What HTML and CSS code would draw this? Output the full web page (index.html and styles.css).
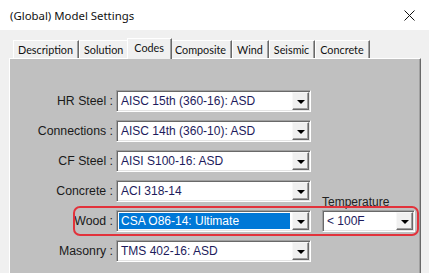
FILE: index.html
```html
<!DOCTYPE html>
<html lang="en">
<head>
  <meta charset="UTF-8" />
  <title>(Global) Model Settings</title>
  <link rel="stylesheet" href="styles.css">
</head>
<body>
  <div class="window">
    <header class="titlebar">
      <span class="title">(Global) Model Settings</span>
      <svg class="close" width="11" height="11" viewBox="0 0 11 11">
        <path d="M0.5 0.5 L10.5 10.5 M10.5 0.5 L0.5 10.5" stroke="#111" stroke-width="1" fill="none" />
      </svg>
    </header>

    <div class="dialog">
      <nav class="tabs">
        <span class="tab">Description</span>
        <span class="tab">Solution</span>
        <span class="tab active">Codes</span>
        <span class="tab">Composite</span>
        <span class="tab">Wind</span>
        <span class="tab">Seismic</span>
        <span class="tab">Concrete</span>
      </nav>

      <section class="panel">
        <div class="codes-grid">
          <label class="field-label">HR Steel :</label>
          <div class="combo"><span class="combo-value">AISC 15th (360-16): ASD</span><span class="combo-btn"></span></div>

          <label class="field-label">Connections :</label>
          <div class="combo"><span class="combo-value">AISC 14th (360-10): ASD</span><span class="combo-btn"></span></div>

          <label class="field-label">CF Steel :</label>
          <div class="combo"><span class="combo-value">AISI S100-16: ASD</span><span class="combo-btn"></span></div>

          <label class="field-label">Concrete :</label>
          <div class="combo"><span class="combo-value">ACI 318-14</span><span class="combo-btn"></span></div>
          <span class="temp-label">Temperature</span>

          <label class="field-label">Wood :</label>
          <div class="combo"><span class="combo-value selected">CSA O86-14: Ultimate</span><span class="combo-btn"></span></div>
          <div class="combo temp-combo"><span class="combo-value">&lt; 100F</span><span class="combo-btn"></span></div>

          <label class="field-label">Masonry :</label>
          <div class="combo"><span class="combo-value">TMS 402-16: ASD</span><span class="combo-btn"></span></div>
        </div>

        <div class="highlight"></div>
      </section>
    </div>
  </div>
</body>
</html>
```

FILE: styles.css
```css
html, body {
  margin: 0;
  padding: 0;
}
body {
  width: 429px;
  height: 273px;
  overflow: hidden;
  background: #f0f0f0;
  font-family: "Liberation Sans", Arial, sans-serif;
}
.window {
  display: flex;
  flex-direction: column;
  height: 100%;
}

/* title bar */
.titlebar {
  height: 30px;
  flex: none;
  background: #fff;
  display: flex;
  align-items: center;
  justify-content: space-between;
  padding: 0 14px 0 10px;
}
.title {
  font-family: "Noto Sans", sans-serif;
  font-size: 11.4px;
  color: #111;
  margin-top: 1px;
}
.close { display: block; }

/* tabs */
.dialog {
  flex: 1;
  display: flex;
  flex-direction: column;
  padding: 8px 0 0 9px;
}
.tabs {
  display: flex;
  align-items: flex-end;
  padding-left: 4px;
  height: 20px;
  position: relative;
  z-index: 1;
}
.tab {
  font-family: Lato, "Noto Sans", sans-serif;
  font-size: 10.8px;
  color: #111;
  height: 18px;
  line-height: 17px;
  box-sizing: border-box;
  padding: 0 5px 0 4px;
  border-top: 1px solid #fff;
  border-left: 1px solid #fff;
  border-right: 1px solid #696969;
  box-shadow: inset -1px 0 #a0a0a0;
  background: #f0f0f0;
}
.tab.active {
  height: 21px;
  line-height: 18px;
  margin: 0 -2px -1px;
  padding: 0 7px 0 6px;
  position: relative;
}

/* panel */
.panel {
  flex: 1;
  position: relative;
  width: 410px;
  background: #c0c0c0;
  border-top: 1px solid #fff;
  border-left: 1px solid #fff;
  border-right: 1px solid #696969;
  box-shadow: inset -1px 0 #a0a0a0;
}
.codes-grid {
  display: grid;
  grid-template-columns: 103px 198px 104px;
  grid-auto-rows: 22px;
  row-gap: 8px;
  padding-top: 31px;
}
.field-label {
  grid-column: 1;
  justify-self: end;
  align-self: center;
  font-size: 12.3px;
  color: #1a1a1a;
  white-space: nowrap;
}
.combo {
  grid-column: 2;
  justify-self: end;
  width: 195px;
  box-sizing: border-box;
  display: flex;
  align-items: stretch;
  background: #fff;
  border: 1px solid;
  border-color: #a0a0a0 #fff #fff #a0a0a0;
  box-shadow: inset 1px 1px #696969, inset -1px -1px #e3e3e3;
  padding: 2px;
}
.combo-value {
  flex: 1;
  font-size: 12px;
  line-height: 16px;
  padding-left: 2px;
  color: #1d1b5c;
  white-space: nowrap;
  overflow: hidden;
}
.combo-value.selected {
  background: #0078d7;
  color: #fff;
}
.combo-btn {
  width: 17px;
  margin: -1px -1px -1px 2px;
  box-sizing: border-box;
  background: #f0f0f0;
  border: 1px solid;
  border-color: #f8f8f8 #696969 #696969 #f8f8f8;
  box-shadow: inset -1px -1px #a0a0a0;
  display: flex;
  align-items: center;
  justify-content: center;
}
.combo-btn::after {
  content: "";
  border-left: 4px solid transparent;
  border-right: 4px solid transparent;
  border-top: 4px solid #000;
  margin-top: 1px;
}
.temp-combo {
  grid-column: 3;
  width: 93px;
  justify-self: end;
}
.temp-label {
  grid-column: 3;
  align-self: end;
  justify-self: end;
  width: 93px;
  margin-bottom: -7px;
  font-size: 12px;
  line-height: 14px;
  color: #222;
}

/* red callout around the wood row */
.highlight {
  position: absolute;
  left: 63px;
  top: 147px;
  width: 346px;
  height: 30px;
  box-sizing: border-box;
  border: 2px solid #e2323b;
  border-radius: 7px;
}
```
